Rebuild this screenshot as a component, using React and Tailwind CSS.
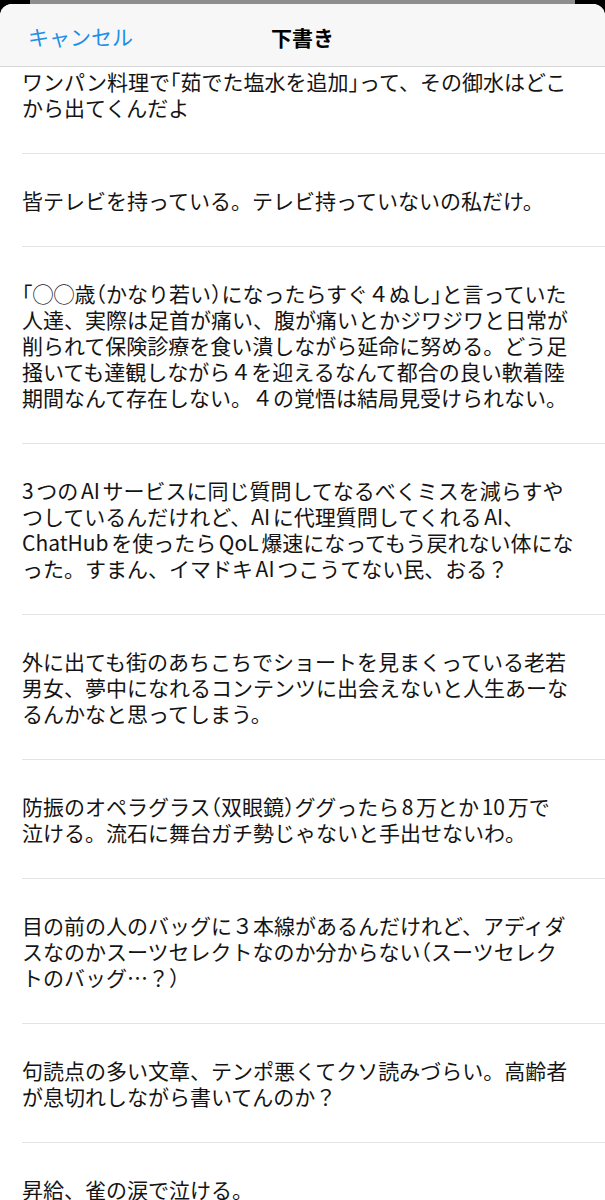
const drafts = [
  ['ワンパン料理で「茹でた塩水を追加」って、その御水はどこ', 'から出てくんだよ'],
  ['皆テレビを持っている。テレビ持っていないの私だけ。'],
  [
    '「◯◯歳（かなり若い）になったらすぐ４ぬし」と言っていた',
    '人達、実際は足首が痛い、腹が痛いとかジワジワと日常が',
    '削られて保険診療を食い潰しながら延命に努める。どう足',
    '掻いても達観しながら４を迎えるなんて都合の良い軟着陸',
    '期間なんて存在しない。４の覚悟は結局見受けられない。',
  ],
  [
    '3つのAIサービスに同じ質問してなるべくミスを減らすや',
    'つしているんだけれど、AIに代理質問してくれるAI、',
    'ChatHubを使ったらQoL爆速になってもう戻れない体にな',
    'った。すまん、イマドキAIつこうてない民、おる？',
  ],
  [
    '外に出ても街のあちこちでショートを見まくっている老若',
    '男女、夢中になれるコンテンツに出会えないと人生あーな',
    'るんかなと思ってしまう。',
  ],
  ['防振のオペラグラス（双眼鏡）ググったら8万とか10万で', '泣ける。流石に舞台ガチ勢じゃないと手出せないわ。'],
  [
    '目の前の人のバッグに３本線があるんだけれど、アディダ',
    'スなのかスーツセレクトなのか分からない（スーツセレク',
    'トのバッグ…？）',
  ],
  ['句読点の多い文章、テンポ悪くてクソ読みづらい。高齢者', 'が息切れしながら書いてんのか？'],
  ['昇給、雀の涙で泣ける。'],
]

const font = "font-['Noto_Sans_CJK_JP','Noto_Sans',sans-serif]"

function Line({ text }) {
  const parts = text.split(/([「」（）])/)
  return (
    <div className="whitespace-nowrap [text-autospace:normal]">
      {parts.map((p, i) =>
        /^[「」（）]$/.test(p) ? (
          <span key={i} className="[font-feature-settings:'halt']">
            {p}
          </span>
        ) : (
          <span key={i}>{p}</span>
        )
      )}
    </div>
  )
}

function Draft({ lines, first }) {
  return (
    <div className={`${first ? 'pt-[1px]' : 'pt-[33px]'} pb-[33px] pr-[20px]`}>
      <div className="text-[21px] leading-[26px] text-[#141414]">
        {lines.map((l, i) => (
          <Line key={i} text={l} />
        ))}
      </div>
    </div>
  )
}

export default function App() {
  return (
    <div className={`h-[1200px] overflow-hidden bg-black ${font}`}>
      <div className="mx-[30px] h-[4px] bg-[#8e8e8e]" />
      <div className="rounded-t-[12px] bg-white overflow-hidden h-[1196px]">
        <div className="relative flex h-[63px] items-center justify-center border-b border-[#d6d6d6] bg-[#f7f7f7] pt-[3px]">
          <button className="absolute left-[28px] top-[17px] text-[21px] leading-[30px] text-[#1d8fe8]">キャンセル</button>
          <h1 className="text-[21px] leading-[30px] font-bold text-black">下書き</h1>
        </div>
        <div className="pl-[22px]">
          {drafts.map((lines, i) => (
            <div key={i} className={i < drafts.length - 1 ? 'border-b border-[#e3e3e3]' : ''}>
              <Draft lines={lines} first={i === 0} />
            </div>
          ))}
        </div>
      </div>
    </div>
  )
}
